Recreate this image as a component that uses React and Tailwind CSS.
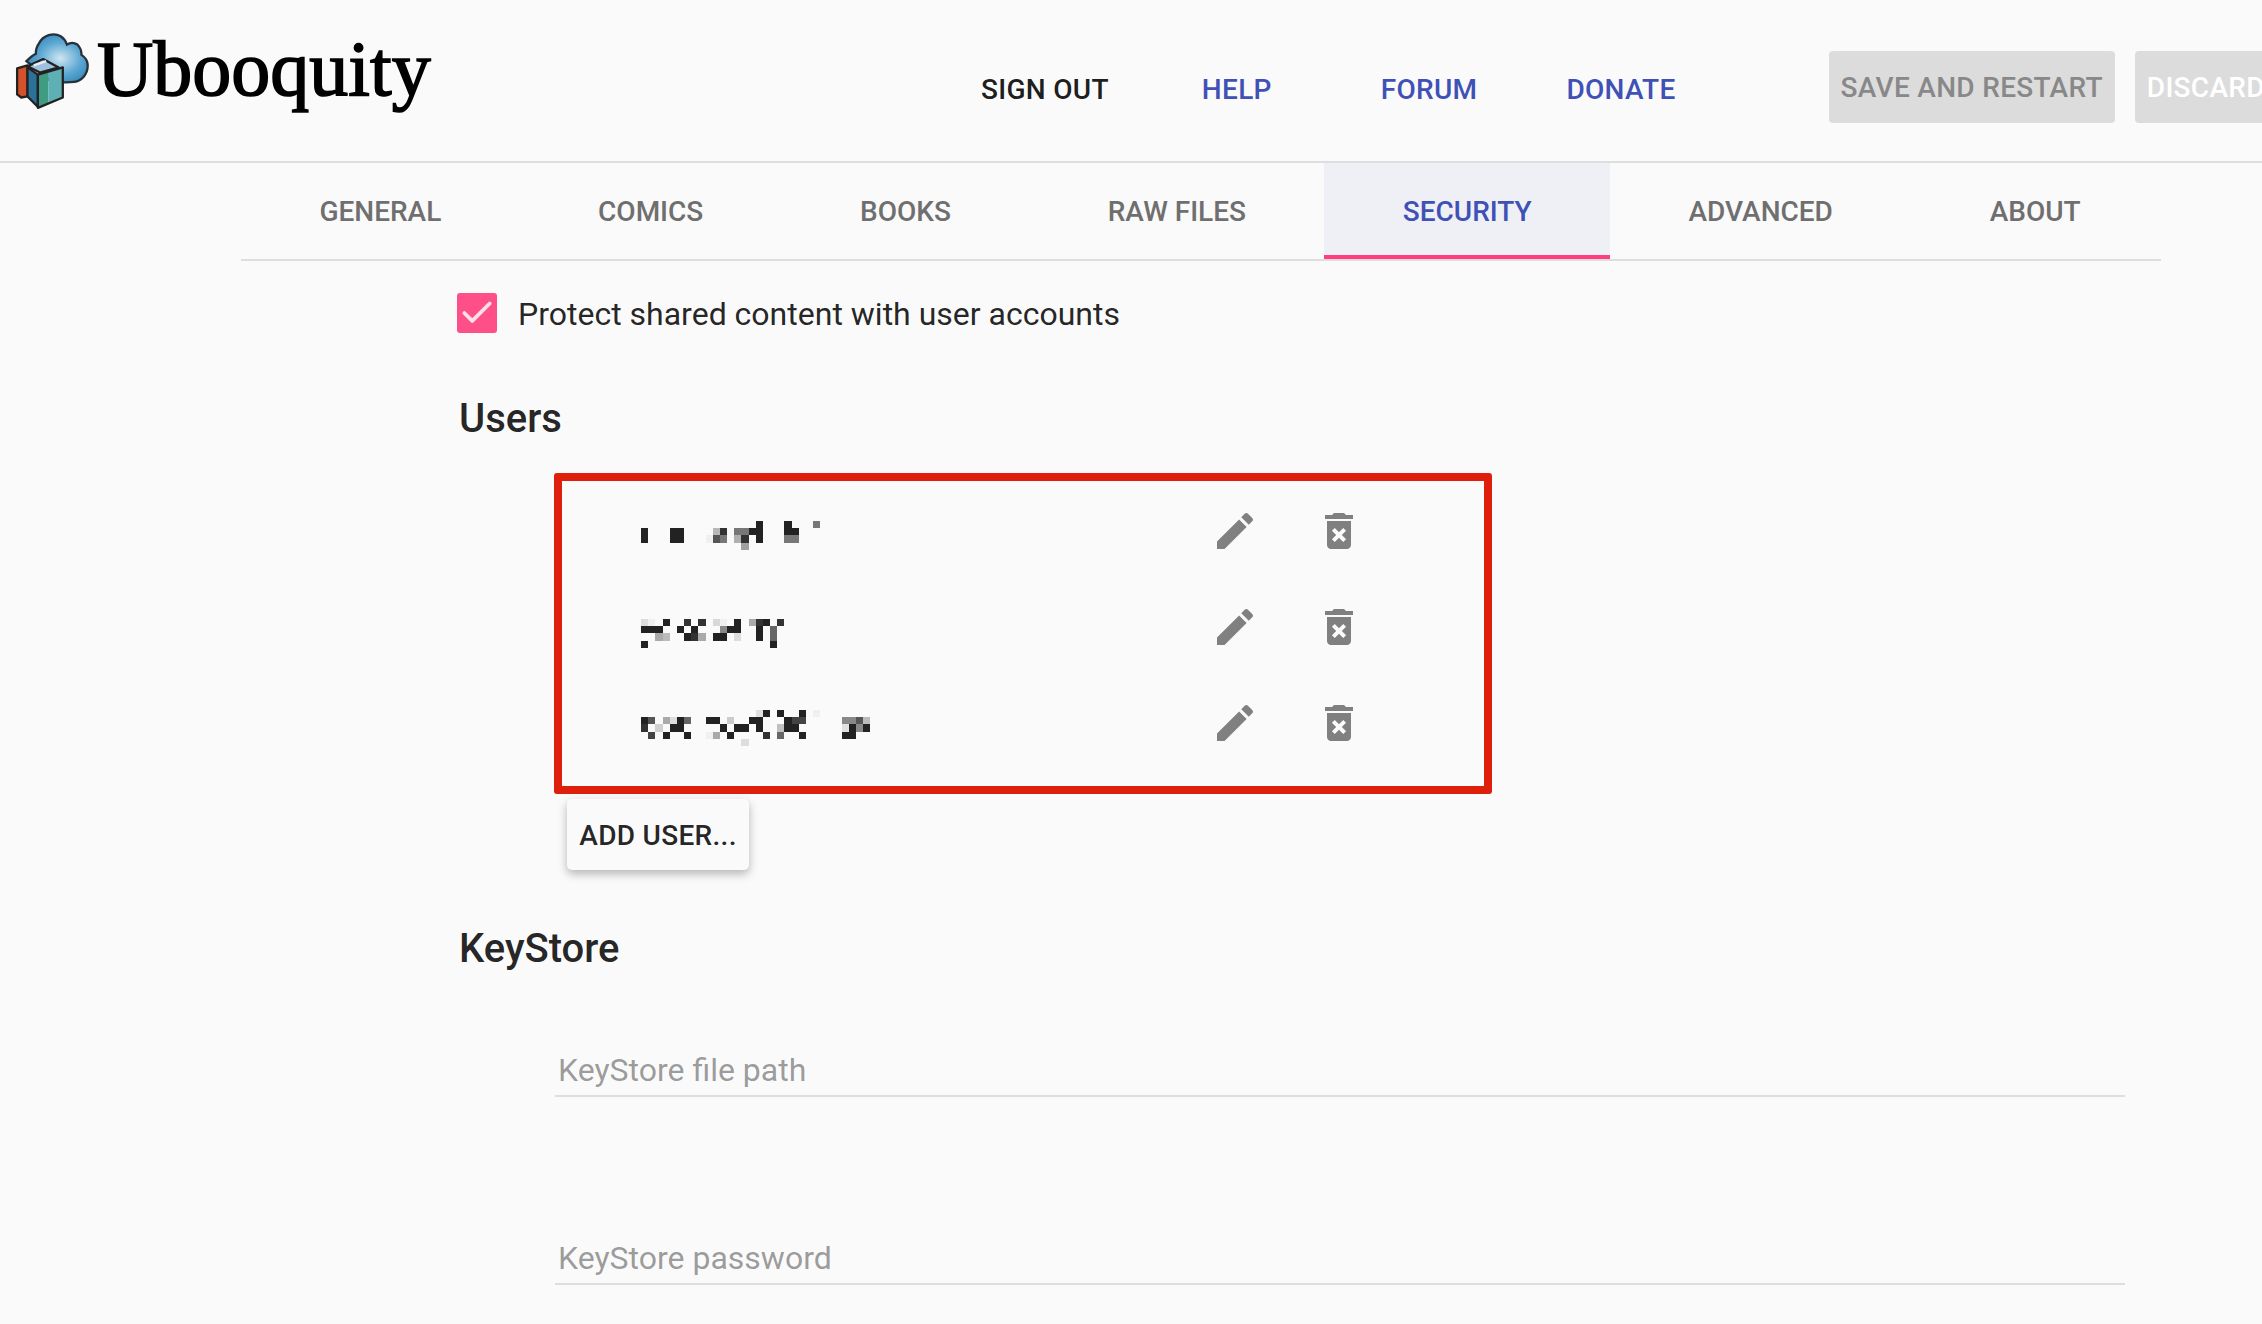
import { Check } from "lucide-react";

const PIXEL = 7.17;

// blurred user names, one list per name: [column, row, colour]
const names = [
  [
    [16, 0, "#222"], [20, 0, "#222"], [24, 0, "#777"],
    [0, 1, "#222"], [4, 1, "#222"], [5, 1, "#222"], [10, 1, "#b8b8b8"], [11, 1, "#333"], [13, 1, "#777"], [14, 1, "#777"], [15, 1, "#222"], [16, 1, "#222"], [20, 1, "#222"], [21, 1, "#222"],
    [0, 2, "#222"], [4, 2, "#222"], [5, 2, "#222"], [9, 2, "#f0f0f0"], [10, 2, "#555"], [11, 2, "#777"], [13, 2, "#b0b0b0"], [14, 2, "#333"], [16, 2, "#222"], [20, 2, "#777"], [21, 2, "#777"],
    [14, 3, "#a0a0a0"],
  ],
  [
    [0, 0, "#ddd"], [1, 0, "#f0f0f0"], [3, 0, "#222"], [6, 0, "#333"], [8, 0, "#333"], [10, 0, "#d8d8d8"], [11, 0, "#f0f0f0"], [13, 0, "#222"], [15, 0, "#aaa"], [16, 0, "#333"], [17, 0, "#222"], [19, 0, "#333"],
    [0, 1, "#222"], [1, 1, "#222"], [2, 1, "#222"], [5, 1, "#222"], [7, 1, "#222"], [11, 1, "#888"], [12, 1, "#222"], [13, 1, "#222"], [16, 1, "#222"], [18, 1, "#666"],
    [2, 2, "#aaa"], [3, 2, "#bbb"], [6, 2, "#222"], [7, 2, "#333"], [8, 2, "#aaa"], [10, 2, "#222"], [11, 2, "#222"], [13, 2, "#ddd"], [16, 2, "#222"], [18, 2, "#666"],
    [0, 3, "#222"], [18, 3, "#222"],
  ],
  [
    [16, 0, "#e0e0e0"], [17, 0, "#222"], [19, 0, "#222"], [22, 0, "#222"], [24, 0, "#f0f0f0"],
    [0, 1, "#222"], [1, 1, "#555"], [3, 1, "#aaa"], [4, 1, "#ddd"], [5, 1, "#222"], [6, 1, "#666"], [9, 1, "#222"], [10, 1, "#222"], [12, 1, "#ccc"], [15, 1, "#222"], [16, 1, "#222"], [20, 1, "#222"], [21, 1, "#444"], [22, 1, "#444"], [28, 1, "#888"], [29, 1, "#888"], [30, 1, "#555"], [31, 1, "#bbb"],
    [0, 2, "#333"], [2, 2, "#d0d0d0"], [4, 2, "#222"], [5, 2, "#222"], [11, 2, "#222"], [13, 2, "#222"], [14, 2, "#222"], [16, 2, "#222"], [19, 2, "#c0c0c0"], [20, 2, "#222"], [21, 2, "#222"], [28, 2, "#e0e0e0"], [29, 2, "#222"], [30, 2, "#888"], [31, 2, "#222"],
    [1, 3, "#444"], [3, 3, "#222"], [6, 3, "#222"], [9, 3, "#f0f0f0"], [10, 3, "#aaa"], [12, 3, "#222"], [17, 3, "#333"], [19, 3, "#666"], [22, 3, "#222"], [28, 3, "#222"], [29, 3, "#222"],
    [14, 4, "#ddd"],
  ],
];

// vertical offset of each name inside its row
const nameOffsets = ["mt-[20px]", "mt-[24px]", "mt-[14px]"];

function PixelName({ cells, className }) {
  return (
    <svg width="240" height="40" className={className} shapeRendering="crispEdges">
      {cells.map(([x, y, fill]) => (
        <rect key={`${x}-${y}`} x={x * PIXEL} y={y * PIXEL} width={PIXEL} height={PIXEL} fill={fill} />
      ))}
    </svg>
  );
}

function EditIcon() {
  return (
    <svg width="48" height="48" viewBox="0 0 24 24" fill="#808080">
      <path d="M3 17.25V21h3.75L17.81 9.94l-3.75-3.75L3 17.25zM20.71 7.04c.39-.39.39-1.02 0-1.41l-2.34-2.34c-.39-.39-1.02-.39-1.41 0l-1.83 1.83 3.75 3.75 1.83-1.83z" />
    </svg>
  );
}

function DeleteIcon() {
  return (
    <svg width="48" height="48" viewBox="0 0 24 24" fill="#808080">
      <path d="M6 19c0 1.1.9 2 2 2h8c1.1 0 2-.9 2-2V7H6v12zm2.46-7.12l1.41-1.41L12 12.59l2.12-2.12 1.41 1.41L13.41 14l2.12 2.12-1.41 1.41L12 15.41l-2.12 2.12-1.41-1.41L10.59 14l-2.13-2.12zM15.5 4l-1-1h-5l-1 1H5v2h14V4z" />
    </svg>
  );
}

function LogoIcon() {
  return (
    <svg width="81" height="81" viewBox="0 0 78 78" className="blur-[0.7px] shrink-0">
      <defs>
        <radialGradient id="cloud" cx="0.55" cy="0.5" r="0.6">
          <stop offset="0" stopColor="#cfe6f3" />
          <stop offset="0.55" stopColor="#5fa9d3" />
          <stop offset="1" stopColor="#2f83b8" />
        </radialGradient>
      </defs>
      <path
        d="M12 30c2-2 6-6 9-7 0-3 0-6 3-10 4-8 14-11 21-7 3 2 5 5 6 8 3-2 7-2 10 0 3 3 4 6 4 10 3 2 6 5 6 10 0 9-6 15-13 16-8 1-15 0-22 0z"
        fill="url(#cloud)"
        stroke="#26313a"
        strokeWidth="2.2"
      />
      <path d="M3 37l10-3v30l-6 1-4-3z" fill="#d4512b" stroke="#222" strokeWidth="2.2" strokeLinejoin="round" />
      <path d="M13 35l15-7 15 8-18 5z" fill="#9fc0dc" stroke="#222" strokeWidth="2.2" strokeLinejoin="round" />
      <path d="M19 34l12-4" stroke="#e8eef6" strokeWidth="2.2" fill="none" />
      <path d="M13 36l10 7v31l-10-10z" fill="#2b7199" stroke="#222" strokeWidth="2.2" strokeLinejoin="round" />
      <path d="M23 43l10-2v30l-10 4z" fill="#3f9c82" />
      <path d="M33 41l14-5v29l-14 6z" fill="#5fb0b5" />
      <path d="M23 43l24-7v29l-24 10z" fill="none" stroke="#222" strokeWidth="2.2" strokeLinejoin="round" />
    </svg>
  );
}

const navLinks = [
  { label: "SIGN OUT", className: "text-black/90 ml-[549px]" },
  { label: "HELP", className: "text-[#3f51b5] ml-[93px]" },
  { label: "FORUM", className: "text-[#3f51b5] ml-[109px]" },
  { label: "DONATE", className: "text-[#3f51b5] ml-[89px]" },
];

const tabs = ["GENERAL", "COMICS", "BOOKS", "RAW FILES", "SECURITY", "ADVANCED", "ABOUT"];

export default function App() {
  return (
    <div className="w-[2262px] h-[1324px] overflow-hidden bg-[#fafafa] text-black/87 font-['Roboto',sans-serif]">
      <header className="h-[163px] border-b-2 border-[#dedede] flex items-start">
        <div className="flex items-start w-[432px] shrink-0 pl-[14px] pt-[30px]">
          <LogoIcon />
          <span className="ml-[2px] mt-[-6px] font-['Liberation_Serif',serif] text-[78px] leading-[90px] text-black [-webkit-text-stroke:1.6px_black] blur-[0.5px]">
            Ubooquity
          </span>
        </div>
        {navLinks.map((link) => (
          <a
            key={link.label}
            className={`mt-[72px] text-[28px] leading-[36px] tracking-[0.3px] font-medium whitespace-nowrap ${link.className}`}
          >
            {link.label}
          </a>
        ))}
        <button className="ml-[153px] mt-[51px] h-[72px] px-[12px] pt-[2px] rounded-[4px] bg-[#dcdcdc] text-[#888] text-[28px] tracking-[0.3px] font-medium shrink-0 whitespace-nowrap">
          SAVE AND RESTART
        </button>
        <button className="ml-[20px] mt-[51px] h-[72px] px-[12px] pt-[2px] rounded-[4px] bg-[#dcdcdc] text-white text-[28px] tracking-[0.3px] font-medium shrink-0 whitespace-nowrap">
          DISCARD
        </button>
      </header>

      <nav className="ml-[241px] w-[1920px] h-[98px] border-b-2 border-[#dedede] flex">
        {tabs.map((tab) =>
          tab === "SECURITY" ? (
            <div
              key={tab}
              className="h-[96px] px-[78.4px] pt-[6px] flex items-center bg-[#eff0f5] border-b-4 border-[#ff3d7f] text-[#3f51b5] text-[28px] font-medium"
            >
              {tab}
            </div>
          ) : (
            <div key={tab} className="h-[96px] px-[78.4px] pt-[2px] flex items-center text-[#6f6f6f] text-[28px] font-medium">
              {tab}
            </div>
          )
        )}
      </nav>

      <main className="pl-[457px]">
        <div className="mt-[32px] flex items-center h-[40px]">
          <span className="w-[40px] h-[40px] rounded-[3px] bg-[#ff4f88] flex items-center justify-center shrink-0">
            <Check size={38} strokeWidth={2.4} color="#fde0ea" />
          </span>
          <span className="ml-[21px] mt-[2px] text-[32px] leading-[40px]">Protect shared content with user accounts</span>
        </div>

        <h2 className="mt-[64px] ml-[2px] text-[40px] leading-[44px] font-medium">Users</h2>

        <div className="mt-[32px] ml-[97px] w-[938px] h-[321px] rounded-[3px] border-[8px] border-[#dd1f0c] pt-[2px]">
          {names.map((cells, i) => (
            <div key={i} className="h-[96px] flex items-center">
              <PixelName cells={cells} className={`ml-[79px] w-[570px] shrink-0 ${nameOffsets[i]}`} />
              <EditIcon />
              <div className="ml-[56px]">
                <DeleteIcon />
              </div>
            </div>
          ))}
        </div>

        <button className="mt-[5px] ml-[110px] h-[71px] w-[182px] pt-[2px] rounded-[5px] bg-[#fafafa] text-[28px] tracking-[0.3px] font-medium shadow-[0_4px_10px_rgba(0,0,0,0.28)] block">
          ADD USER...
        </button>

        <h2 className="mt-[57px] ml-[2px] text-[40px] leading-[44px] font-medium">KeyStore</h2>

        <div className="mt-[74px] ml-[98px] w-[1570px] h-[52px] border-b-2 border-[#dedede] flex items-center pl-[3px] text-[32px] text-black/40">
          KeyStore file path
        </div>
        <div className="mt-[136px] ml-[98px] w-[1570px] h-[52px] border-b-2 border-[#dedede] flex items-center pl-[3px] text-[32px] text-black/40">
          KeyStore password
        </div>
      </main>
    </div>
  );
}
